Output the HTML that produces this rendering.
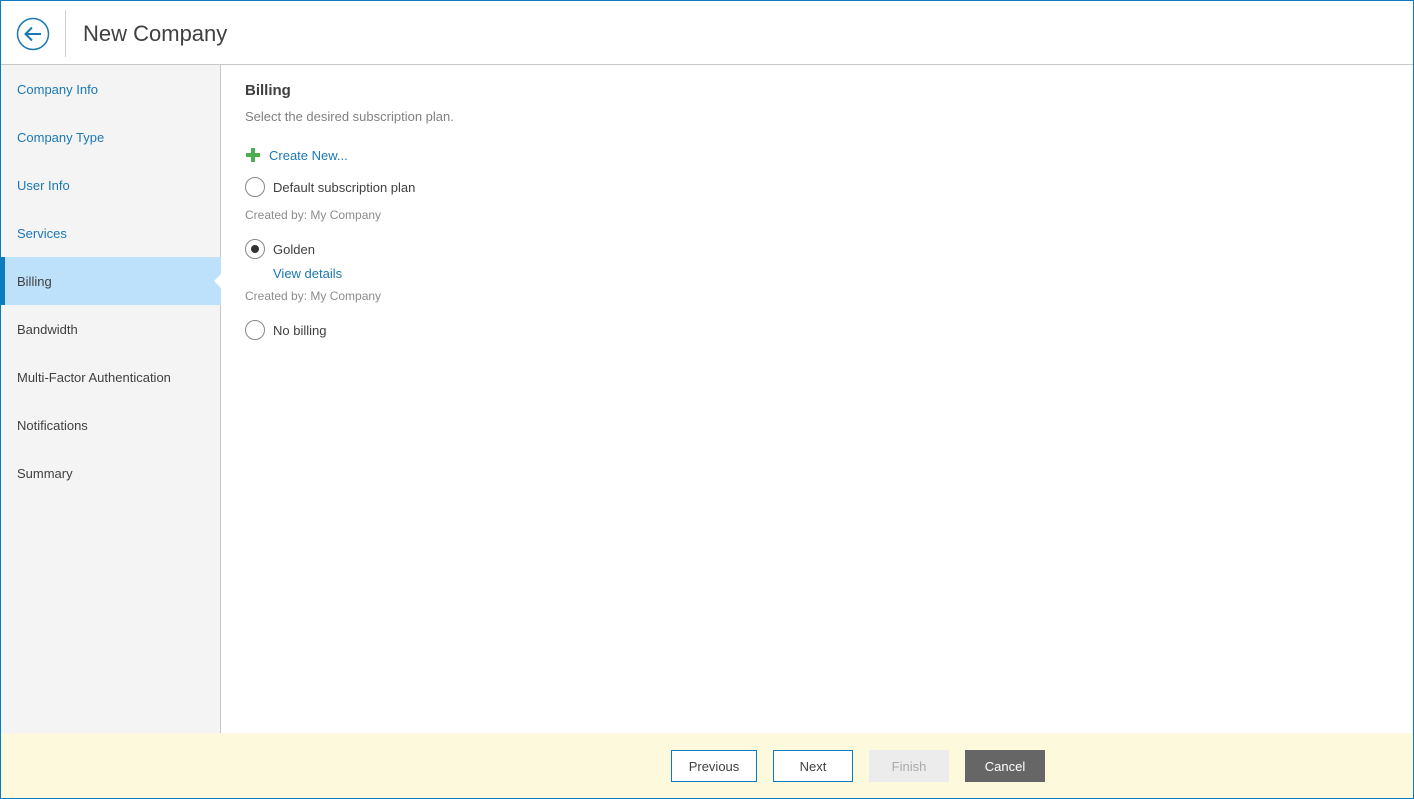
<!DOCTYPE html>
<html><head><style>
*{margin:0;padding:0;box-sizing:border-box}
body{width:1414px;height:799px;overflow:hidden;font-family:"Liberation Sans",sans-serif;font-size:13px;background:#fff;position:relative}
.frame{position:absolute;left:0;top:0;width:1414px;height:799px;border:1px solid #0a7bbd}
.hdr{position:absolute;left:1px;top:1px;width:1412px;height:64px;border-bottom:1px solid #c8c8c8;background:#fff}
.sep{position:absolute;left:64px;top:9px;width:1px;height:47px;background:#d0d0d0}
.title{position:absolute;left:82px;top:20px;font-size:22px;color:#404040}
.side{position:absolute;left:1px;top:65px;width:220px;height:668px;background:#f4f4f4;border-right:1px solid #c8c8c8}
.it{position:absolute;left:16px;font-size:13px;color:#404040}
.t{position:absolute;font-size:13px;color:#404040}
.it.blue,.t.blue{color:#1a78b4}
.act{position:absolute;left:0;top:192px;width:220px;height:48px;background:#bde0fb;border-left:4px solid #0a7bbd}
.foot{position:absolute;left:1px;top:733px;width:1412px;height:65px;background:#fdf9dc}
.btn{position:absolute;top:17px;height:32px;line-height:31px;text-align:center;font-size:13px;color:#404040;border:1px solid #0a7bbd;background:#fff}
.t.g{color:#8c8c8c;font-size:12px}
.rad{position:absolute;left:245px;width:20px;height:20px;border:1px solid #888;border-radius:50%;background:#fff}
</style></head><body>
<div class="hdr">
<svg style="position:absolute;left:15px;top:16px" width="34" height="34" viewBox="0 0 34 34"><circle cx="17" cy="17" r="15.5" fill="none" stroke="#1a78b4" stroke-width="1.5"/><path d="M25 17H10M16 10.5L9.5 17l6.5 6.5" fill="none" stroke="#1a78b4" stroke-width="2"/></svg>
<div class="sep"></div><div class="title">New Company</div></div>
<div class="side">
<div class="act"></div>
<svg style="position:absolute;left:212px;top:208px" width="9" height="16"><path d="M9 0L1 8l8 8z" fill="#fff"/></svg>
<div class="it blue" style="top:17px">Company Info</div>
<div class="it blue" style="top:65px">Company Type</div>
<div class="it blue" style="top:113px">User Info</div>
<div class="it blue" style="top:161px">Services</div>
<div class="it" style="top:209px">Billing</div>
<div class="it" style="top:257px">Bandwidth</div>
<div class="it" style="top:305px">Multi-Factor Authentication</div>
<div class="it" style="top:353px">Notifications</div>
<div class="it" style="top:401px">Summary</div>
</div>
<div class="t" style="left:245px;top:82px;font-size:15px;font-weight:bold">Billing</div>
<div class="t" style="left:245px;top:109px;color:#808080">Select the desired subscription plan.</div>
<svg style="position:absolute;left:246px;top:148px" width="14" height="14"><path d="M5 0h4v5h5v4H9v5H5V9H0V5h5z" fill="#4caf50"/></svg>
<div class="t blue" style="left:269px;top:148px">Create New...</div>
<div class="rad" style="top:177px"></div>
<div class="t" style="left:273px;top:180px">Default subscription plan</div>
<div class="t g" style="left:245px;top:208px">Created by: My Company</div>
<div class="rad" style="top:239px"><div style="position:absolute;left:5px;top:5px;width:8px;height:8px;border-radius:50%;background:#333"></div></div>
<div class="t" style="left:273px;top:242px">Golden</div>
<div class="t blue" style="left:273px;top:266px">View details</div>
<div class="t g" style="left:245px;top:289px">Created by: My Company</div>
<div class="rad" style="top:320px"></div>
<div class="t" style="left:273px;top:323px">No billing</div>
<div class="foot">
<div class="btn" style="left:670px;width:86px">Previous</div>
<div class="btn" style="left:772px;width:80px">Next</div>
<div class="btn" style="left:868px;width:80px;border-color:#ececec;background:#ececec;color:#aaa">Finish</div>
<div class="btn" style="left:964px;width:80px;border-color:#666;background:#666;color:#fff">Cancel</div>
</div>
<div class="frame"></div>
</body></html>
